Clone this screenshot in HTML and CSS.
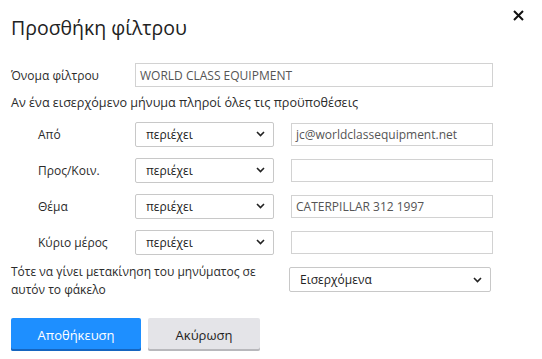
FILE: index.html
```html
<html>
<head>
  <meta charset="utf-8">
  <link rel="stylesheet" href="styles.css">
</head>
<body>

<div class="dialog">
  <div class="dialog-head">
    <h1 class="title">Προσθήκη φίλτρου</h1>
    <button class="close" type="button" aria-label="Κλείσιμο">
      <svg width="11" height="11" viewBox="0 0 11 11"><path d="M1 1 L10 10 M10 1 L1 10" stroke="#111" stroke-width="2" fill="none"/></svg>
    </button>
  </div>

  <div class="name-row">
    <label class="name-label">Όνομα φίλτρου</label>
    <div class="field name-field">WORLD CLASS EQUIPMENT</div>
  </div>

  <p class="cond-intro">Αν ένα εισερχόμενο μήνυμα πληροί όλες τις προϋποθέσεις</p>

  <div class="conditions">
    <div class="cond-row">
      <span class="cond-label">Από</span>
      <div class="select"><span>περιέχει</span><svg class="chev" width="9" height="6" viewBox="0 0 9 6"><path d="M1 1 L4.5 4.5 L8 1" stroke="#222" stroke-width="1.6" fill="none"/></svg></div>
      <div class="field cond-field">jc@worldclassequipment.net</div>
    </div>
    <div class="cond-row">
      <span class="cond-label">Προς/Κοιν.</span>
      <div class="select"><span>περιέχει</span><svg class="chev" width="9" height="6" viewBox="0 0 9 6"><path d="M1 1 L4.5 4.5 L8 1" stroke="#222" stroke-width="1.6" fill="none"/></svg></div>
      <div class="field cond-field"></div>
    </div>
    <div class="cond-row">
      <span class="cond-label">Θέμα</span>
      <div class="select"><span>περιέχει</span><svg class="chev" width="9" height="6" viewBox="0 0 9 6"><path d="M1 1 L4.5 4.5 L8 1" stroke="#222" stroke-width="1.6" fill="none"/></svg></div>
      <div class="field cond-field">CATERPILLAR 312 1997</div>
    </div>
    <div class="cond-row">
      <span class="cond-label">Κύριο μέρος</span>
      <div class="select"><span>περιέχει</span><svg class="chev" width="9" height="6" viewBox="0 0 9 6"><path d="M1 1 L4.5 4.5 L8 1" stroke="#222" stroke-width="1.6" fill="none"/></svg></div>
      <div class="field cond-field"></div>
    </div>
  </div>

  <div class="action-row">
    <p class="action-text">Τότε να γίνει μετακίνηση του μηνύματος σε αυτόν το φάκελο</p>
    <div class="select folder-select"><span>Εισερχόμενα</span><svg class="chev" width="9" height="6" viewBox="0 0 9 6"><path d="M1 1 L4.5 4.5 L8 1" stroke="#222" stroke-width="1.6" fill="none"/></svg></div>
  </div>

  <div class="buttons">
    <button class="btn btn-save" type="button">Αποθήκευση</button>
    <button class="btn btn-cancel" type="button">Ακύρωση</button>
  </div>
</div>

</body>
</html>
```

FILE: styles.css
```css
body {
    margin: 0;
    background: #fff;
    font-family: "Open Sans", "Noto Sans", sans-serif;
    font-size: 12px;
    color: #2b2b2b;
}

.dialog {
    padding: 0 11px;
    width: 520px;
}

.dialog-head {
    display: flex;
    justify-content: space-between;
    align-items: flex-start;
    height: 56px;
}

.title {
    margin: 14px 0 0 0;
    font-weight: 400;
    font-size: 19.5px;
    line-height: 28px;
    color: #222;
}

.close {
    margin: 7px 5px 0 0;
    padding: 0;
    width: 16px;
    height: 16px;
    border: 0;
    background: none;
    display: flex;
    align-items: center;
    justify-content: center;
}

.name-row {
    display: flex;
    align-items: center;
    margin-top: 7px;
}

.name-label {
    width: 124px;
}

.field {
    box-sizing: border-box;
    border: 1px solid #d2d2d2;
    background: #fff;
    color: #555;
    padding: 0 4px;
    display: flex;
    align-items: center;
}

.name-field {
    width: 358px;
    height: 24px;
}

.cond-intro {
    margin: 3px 0 0 0;
    height: 26px;
    line-height: 26px;
    font-size: 12.6px;
}

.conditions {
    padding-left: 27px;
}

.cond-row {
    display: flex;
    align-items: center;
    height: 36px;
}

.cond-label {
    width: 97px;
}

.select {
    box-sizing: border-box;
    display: flex;
    align-items: center;
    justify-content: space-between;
    width: 139px;
    height: 25px;
    border: 1px solid #c8c8c8;
    border-radius: 2px;
    padding: 0 8px 0 10px;
    color: #222;
}

.chev {
    display: block;
}

.cond-field {
    margin-left: 17px;
    width: 202px;
    height: 23px;
}

.action-row {
    display: flex;
    align-items: flex-start;
    margin-top: 3px;
}

.action-text {
    margin: 0;
    width: 278px;
    line-height: 18px;
}

.folder-select {
    width: 202px;
    height: 25px;
    margin-top: 4px;
}

.buttons {
    display: flex;
    gap: 7px;
    margin-top: 19px;
}

.btn {
    height: 33px;
    border: 0;
    border-radius: 2px;
    font-family: "Open Sans", "Noto Sans", sans-serif;
    font-size: 13px;
}

.btn-save {
    width: 130px;
    background: #1e8fff;
    color: #fff;
    box-shadow: inset 0 -2px 0 #1565c0;
}

.btn-cancel {
    width: 112px;
    background: #e4e4e8;
    color: #222;
    box-shadow: inset 0 -2px 0 #b8b8bc;
}
```
